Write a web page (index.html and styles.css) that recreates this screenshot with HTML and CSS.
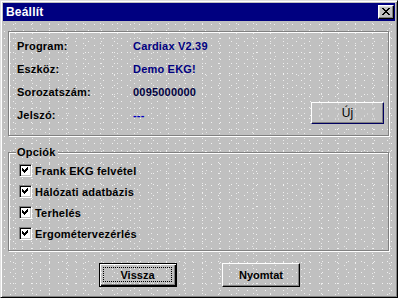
FILE: index.html
```html
<!DOCTYPE html>
<html lang="hu">
<head>
  <meta charset="UTF-8" />
  <meta name="viewport" content="width=device-width, initial-scale=1.0"/>
  <title>Beállít</title>
  <link rel="stylesheet" href="styles.css">
</head>
<body>
  <div class="window">
    <div class="titlebar">
      <span class="title">Beállít</span>
      <button class="close" aria-label="Bezár">
        <svg width="8" height="7" viewBox="0 0 8 7" shape-rendering="crispEdges">
          <path d="M0 0h2v1h-2zM6 0h2v1h-2zM1 1h2v1h-2zM5 1h2v1h-2zM2 2h4v1h-4zM3 3h2v1h-2zM2 4h4v1h-4zM1 5h2v1h-2zM5 5h2v1h-2zM0 6h2v1h-2zM6 6h2v1h-2z" fill="#000"/>
        </svg>
      </button>
    </div>

    <div class="content">
      <div class="group info">
        <div class="row"><span class="label">Program:</span><span class="value">Cardiax V2.39</span></div>
        <div class="row"><span class="label">Eszköz:</span><span class="value">Demo EKG!</span></div>
        <div class="row"><span class="label">Sorozatszám:</span><span class="value dark">0095000000</span></div>
        <div class="row">
          <span class="label">Jelszó:</span><span class="value pass">---</span>
          <button class="btn btn-new">Új</button>
        </div>
      </div>

      <div class="group options">
        <span class="legend">Opciók</span>
        <label class="check"><span class="box"><svg width="9" height="9" viewBox="0 0 9 9" shape-rendering="crispEdges"><path d="M6 1h1v3h-1zM5 2h1v3h-1zM4 3h1v3h-1zM3 4h1v3h-1zM2 3h1v3h-1zM1 2h1v3h-1z" fill="#000"/></svg></span>Frank EKG felvétel</label>
        <label class="check"><span class="box"><svg width="9" height="9" viewBox="0 0 9 9" shape-rendering="crispEdges"><path d="M6 1h1v3h-1zM5 2h1v3h-1zM4 3h1v3h-1zM3 4h1v3h-1zM2 3h1v3h-1zM1 2h1v3h-1z" fill="#000"/></svg></span>Hálózati adatbázis</label>
        <label class="check"><span class="box"><svg width="9" height="9" viewBox="0 0 9 9" shape-rendering="crispEdges"><path d="M6 1h1v3h-1zM5 2h1v3h-1zM4 3h1v3h-1zM3 4h1v3h-1zM2 3h1v3h-1zM1 2h1v3h-1z" fill="#000"/></svg></span>Terhelés</label>
        <label class="check"><span class="box"><svg width="9" height="9" viewBox="0 0 9 9" shape-rendering="crispEdges"><path d="M6 1h1v3h-1zM5 2h1v3h-1zM4 3h1v3h-1zM3 4h1v3h-1zM2 3h1v3h-1zM1 2h1v3h-1z" fill="#000"/></svg></span>Ergométervezérlés</label>
      </div>

      <div class="actions">
        <button class="btn btn-default"><span class="focus">Vissza</span></button>
        <button class="btn">Nyomtat</button>
      </div>
    </div>
  </div>
</body>
</html>
```

FILE: styles.css
```css
* {
  box-sizing: border-box;
}

body {
  margin: 0;
  font-family: "Liberation Sans", Arial, sans-serif;
  font-size: 11px;
  font-weight: bold;
  letter-spacing: 0.2px;
  color: #000;
  background: #c0c0c0;
}

/* speckled face texture, fixed so overlapping pieces line up */
.window,
.btn,
.legend {
  background-color: #c0c0c0;
  background-image:
    radial-gradient(circle, rgba(255,255,255,0.8) 0.55px, transparent 0.75px),
    radial-gradient(circle, rgba(255,255,255,0.75) 0.55px, transparent 0.75px),
    radial-gradient(circle, rgba(255,255,255,0.7) 0.55px, transparent 0.75px),
    radial-gradient(circle, rgba(255,255,255,0.6) 0.55px, transparent 0.75px);
  background-size: 9px 7px, 13px 11px, 17px 5px, 23px 19px;
  background-position: 0 0, 4px 3px, 7px 1px, 11px 9px;
  background-attachment: fixed;
}

.window {
  width: 398px;
  height: 298px;
  border: 1px solid;
  border-color: #dfdfdf #000 #000 #dfdfdf;
  box-shadow: inset 1px 1px #fff, inset -1px -1px #808080;
  padding: 2px;
  display: flex;
  flex-direction: column;
}

.titlebar {
  height: 18px;
  background: #000080;
  display: flex;
  align-items: center;
  justify-content: space-between;
  padding-left: 3px;
  padding-right: 1px;
}

.title {
  color: #fff;
  font-size: 12px;
  letter-spacing: 0.2px;
}

.close {
  width: 16px;
  height: 14px;
  padding: 0;
  border: 1px solid;
  border-color: #fff #000 #000 #fff;
  box-shadow: inset -1px -1px #808080, inset 1px 1px #dfdfdf;
  background: #c0c0c0;
  display: flex;
  align-items: center;
  justify-content: center;
}

.close svg {
  display: block;
  margin-left: -1px;
  margin-top: -1px;
}

.content {
  padding: 10px 6px 0 5px;
  display: flex;
  flex-direction: column;
}

.group {
  position: relative;
  border: 1px solid #808080;
  box-shadow: inset 1px 1px #fff, 1px 1px #fff;
}

.info {
  height: 105px;
  padding: 2px 4px 0 8px;
}

.row {
  height: 23px;
  display: flex;
  align-items: center;
}

.label {
  width: 116px;
}

.value {
  color: #000080;
}

.value.dark {
  color: #000040;
}

.value.pass {
  color: #0000c0;
}

.btn {
  font: inherit;
  color: #000;
  padding: 0;
  width: 78px;
  height: 24px;
  border: 1px solid;
  border-color: #fff #000 #000 #fff;
  box-shadow: inset -1px -1px #808080;
  display: flex;
  align-items: center;
  justify-content: center;
}

.btn-new {
  width: 73px;
  height: 22px;
  margin-left: auto;
  margin-bottom: 4px;
  font-weight: normal;
  font-size: 12px;
  border-color: #fff #000060 #000060 #fff;
}

.options {
  margin-top: 16px;
  height: 99px;
  padding: 7px 0 0 10px;
}

.legend {
  position: absolute;
  top: -7px;
  left: 7px;
  padding: 0 2px 0 1px;
  line-height: 13px;
}

.check {
  height: 21px;
  display: flex;
  align-items: center;
}

.box {
  width: 13px;
  height: 13px;
  margin-right: 3px;
  background: #fff;
  border: 1px solid;
  border-color: #808080 #fff #fff #808080;
  box-shadow: inset 1px 1px #000, inset -1px -1px #c0c0c0;
  padding: 1px;
}

.box svg {
  display: block;
}

.actions {
  margin-top: 12px;
  padding-left: 2px;
  display: flex;
  justify-content: center;
  gap: 45px;
}

.btn-default {
  border: 1px solid #000;
  box-shadow: inset 1px 1px #fff, inset -1px -1px #000, inset -2px -2px #808080;
  padding: 3px 4px 4px 3px;
}

.focus {
  flex: 1;
  align-self: stretch;
  border: 1px dotted #000;
  display: flex;
  align-items: center;
  justify-content: center;
}
```
